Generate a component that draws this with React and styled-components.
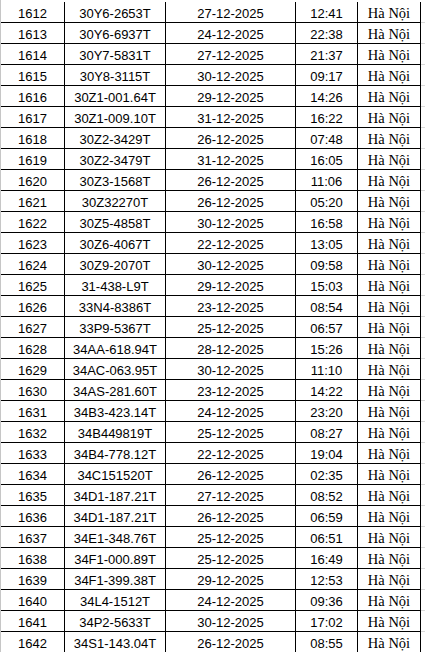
import React from "react";
import styled, { createGlobalStyle } from "styled-components";

const GlobalStyle = createGlobalStyle`
  html, body {
    margin: 0;
    padding: 0;
    background: #ffffff;
  }
`;

const Sheet = styled.div`
  width: 425px;
  height: 652px;
  overflow: hidden;
  padding-top: 2px;
  box-sizing: border-box;
  border-left: 1px solid #c6c6c6; // excel row header edge
`;

const Row = styled.div`
  display: grid;
  grid-template-columns: 64px 101px 130px 62px 63px 5px;
  height: 21px;
`;

const Cell = styled.div`
  box-sizing: border-box;
  display: flex;
  align-items: flex-end;
  justify-content: center;
  border-right: 1px solid #000;
  border-bottom: 1px solid #000;
  font-family: ${(p) =>
    p.$serif ? '"Liberation Serif", serif' : '"Liberation Sans", sans-serif'};
  font-size: ${(p) => (p.$serif ? "14.5px" : "13px")};
  line-height: 16px;
  padding-bottom: ${(p) => (p.$serif ? "1px" : "0")};
  color: #000;
  white-space: nowrap;
`;

const Grid = styled.div`
  border-bottom: 1px solid #d9d9d9; // faint gridline past the table
`;

const rides = [
  ["1612", "30Y6-2653T", "27-12-2025", "12:41"],
  ["1613", "30Y6-6937T", "24-12-2025", "22:38"],
  ["1614", "30Y7-5831T", "27-12-2025", "21:37"],
  ["1615", "30Y8-3115T", "30-12-2025", "09:17"],
  ["1616", "30Z1-001.64T", "29-12-2025", "14:26"],
  ["1617", "30Z1-009.10T", "31-12-2025", "16:22"],
  ["1618", "30Z2-3429T", "26-12-2025", "07:48"],
  ["1619", "30Z2-3479T", "31-12-2025", "16:05"],
  ["1620", "30Z3-1568T", "26-12-2025", "11:06"],
  ["1621", "30Z32270T", "26-12-2025", "05:20"],
  ["1622", "30Z5-4858T", "30-12-2025", "16:58"],
  ["1623", "30Z6-4067T", "22-12-2025", "13:05"],
  ["1624", "30Z9-2070T", "30-12-2025", "09:58"],
  ["1625", "31-438-L9T", "29-12-2025", "15:03"],
  ["1626", "33N4-8386T", "23-12-2025", "08:54"],
  ["1627", "33P9-5367T", "25-12-2025", "06:57"],
  ["1628", "34AA-618.94T", "28-12-2025", "15:26"],
  ["1629", "34AC-063.95T", "30-12-2025", "11:10"],
  ["1630", "34AS-281.60T", "23-12-2025", "14:22"],
  ["1631", "34B3-423.14T", "24-12-2025", "23:20"],
  ["1632", "34B449819T", "25-12-2025", "08:27"],
  ["1633", "34B4-778.12T", "22-12-2025", "19:04"],
  ["1634", "34C151520T", "26-12-2025", "02:35"],
  ["1635", "34D1-187.21T", "27-12-2025", "08:52"],
  ["1636", "34D1-187.21T", "26-12-2025", "06:59"],
  ["1637", "34E1-348.76T", "25-12-2025", "06:51"],
  ["1638", "34F1-000.89T", "25-12-2025", "16:49"],
  ["1639", "34F1-399.38T", "29-12-2025", "12:53"],
  ["1640", "34L4-1512T", "24-12-2025", "09:36"],
  ["1641", "34P2-5633T", "30-12-2025", "17:02"],
  ["1642", "34S1-143.04T", "26-12-2025", "08:55"],
];

export default function App() {
  return (
    <>
      <GlobalStyle />
      <Sheet>
        {rides.map((r) => (
          <Row key={r[0]}>
            <Cell>{r[0]}</Cell>
            <Cell>{r[1]}</Cell>
            <Cell>{r[2]}</Cell>
            <Cell>{r[3]}</Cell>
            <Cell $serif>Hà Nội</Cell>
            <Grid />
          </Row>
        ))}
      </Sheet>
    </>
  );
}
